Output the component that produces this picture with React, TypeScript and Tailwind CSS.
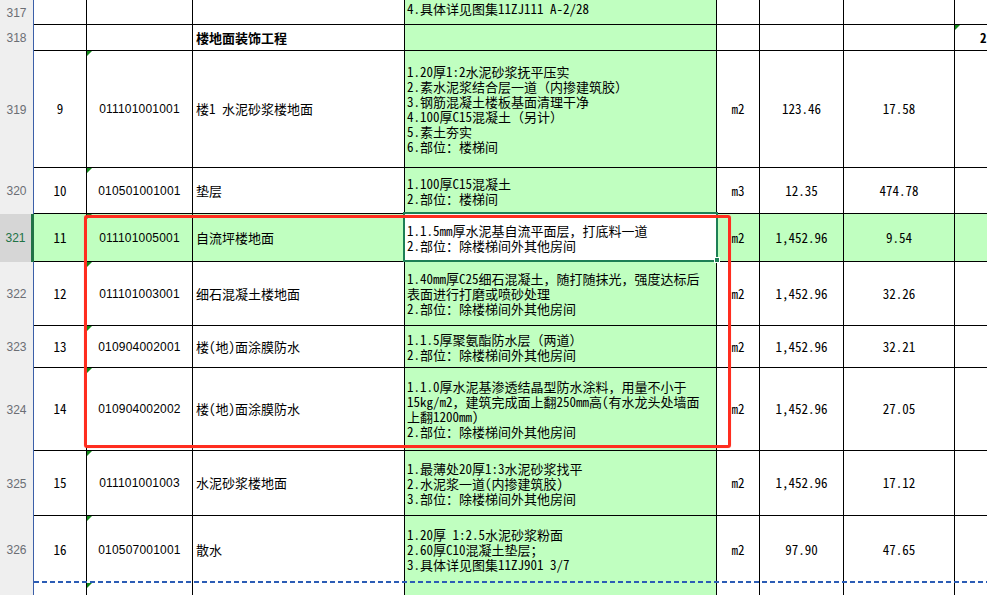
const song = "font-['Noto_Sans_Mono_CJK_SC','Noto_Sans_CJK_SC',monospace]";
const sans = "font-['Liberation_Sans','Noto_Sans_CJK_SC',sans-serif]";

type RowData = {
  n: number;
  h: string;
  a?: string;
  b?: string;
  c?: string;
  bold?: boolean;
  d?: string[];
  dTop?: boolean;
  e?: string;
  f?: string;
  g?: string;
  hText?: string;
  tri?: boolean;
  noBottom?: boolean;
  hideNum?: boolean;
};

const rows: RowData[] = [
  { n: 317, h: "h-[25px]", d: ["4.具体详见图集11ZJ111 A-2/28"], dTop: true },
  { n: 318, h: "h-[26px]", c: "楼地面装饰工程", bold: true, hText: "2" },
  {
    n: 319,
    h: "h-[117px]",
    a: "9",
    b: "011101001001",
    c: "楼1 水泥砂浆楼地面",
    d: [
      "1.20厚1:2水泥砂浆抚平压实",
      "2.素水泥浆结合层一道（内掺建筑胶）",
      "3.钢筋混凝土楼板基面清理干净",
      "4.100厚C15混凝土（另计）",
      "5.素土夯实",
      "6.部位：楼梯间",
    ],
    e: "m2",
    f: "123.46",
    g: "17.58",
    tri: true,
  },
  {
    n: 320,
    h: "h-[46px]",
    a: "10",
    b: "010501001001",
    c: "垫层",
    d: ["1.100厚C15混凝土", "2.部位：楼梯间"],
    e: "m3",
    f: "12.35",
    g: "474.78",
    tri: true,
  },
  {
    n: 321,
    h: "h-[48px]",
    a: "11",
    b: "011101005001",
    c: "自流坪楼地面",
    d: ["1.1.5mm厚水泥基自流平面层，打底料一道", "2.部位：除楼梯间外其他房间"],
    e: "m2",
    f: "1,452.96",
    g: "9.54",
    tri: true,
  },
  {
    n: 322,
    h: "h-[64px]",
    a: "12",
    b: "011101003001",
    c: "细石混凝土楼地面",
    d: [
      "1.40mm厚C25细石混凝土，随打随抹光，强度达标后",
      "表面进行打磨或喷砂处理",
      "2.部位：除楼梯间外其他房间",
    ],
    e: "m2",
    f: "1,452.96",
    g: "32.26",
    tri: true,
  },
  {
    n: 323,
    h: "h-[42px]",
    a: "13",
    b: "010904002001",
    c: "楼(地)面涂膜防水",
    d: ["1.1.5厚聚氨酯防水层（两道）", "2.部位：除楼梯间外其他房间"],
    e: "m2",
    f: "1,452.96",
    g: "32.21",
    tri: true,
  },
  {
    n: 324,
    h: "h-[83px]",
    a: "14",
    b: "010904002002",
    c: "楼(地)面涂膜防水",
    d: [
      "1.1.0厚水泥基渗透结晶型防水涂料，用量不小于",
      "15kg/m2，建筑完成面上翻250mm高(有水龙头处墙面",
      "上翻1200mm)",
      "2.部位：除楼梯间外其他房间",
    ],
    e: "m2",
    f: "1,452.96",
    g: "27.05",
    tri: true,
  },
  {
    n: 325,
    h: "h-[65px]",
    a: "15",
    b: "011101001003",
    c: "水泥砂浆楼地面",
    d: ["1.最薄处20厚1:3水泥砂浆找平", "2.水泥浆一道(内掺建筑胶)", "3.部位：除楼梯间外其他房间"],
    e: "m2",
    f: "1,452.96",
    g: "17.12",
    tri: true,
  },
  {
    n: 326,
    h: "h-[67px]",
    a: "16",
    b: "010507001001",
    c: "散水",
    d: ["1.20厚 1:2.5水泥砂浆粉面", "2.60厚C10混凝土垫层；", "3.具体详见图集11ZJ901 3/7"],
    e: "m2",
    f: "97.90",
    g: "47.65",
    tri: true,
    noBottom: true,
  },
  { n: 327, h: "h-[48px]", tri: true, hideNum: true },
];

function Triangle() {
  return (
    <span className="absolute left-0 top-0 h-0 w-0 border-t-[5px] border-r-[5px] border-t-[#12881a] border-r-transparent" />
  );
}

function Row({ r }: { r: RowData }) {
  const sel = r.n === 321;
  const bg = sel ? "bg-[#c0ffc0]" : "bg-white";
  const line = r.noBottom ? "border-r border-black" : "border-r border-b border-black";
  return (
    <div className={`flex ${r.h}`}>
      <div
        className={`flex w-[34px] shrink-0 items-center justify-center text-[12px] ${sans} ${
          sel
            ? "border-r-[3px] border-[#217346] bg-[#d6d6d6] text-[#217346]"
            : "border-r border-[#3b5fa8] bg-[#efefef] text-[#6b6e74]"
        }`}
      >
        {!r.hideNum && r.n}
      </div>
      <div className={`flex w-[53px] shrink-0 items-center justify-center text-[13px] text-black ${song} ${bg} ${line}`}>
        {r.a}
      </div>
      <div
        className={`relative flex w-[106px] shrink-0 items-center justify-center text-[12px] tracking-[0.2px] text-black ${sans} ${bg} ${line}`}
      >
        {r.tri && <Triangle />}
        {r.b}
      </div>
      <div
        className={`flex w-[212px] shrink-0 items-center whitespace-nowrap pl-[3px] text-[13px] text-black ${song} ${
          r.bold ? "font-bold" : ""
        } ${bg} ${line}`}
      >
        {r.c}
      </div>
      <div
        className={`flex w-[312px] shrink-0 flex-col whitespace-nowrap pl-[2px] text-[13px] leading-[15px] text-black ${song} ${
          r.dTop ? "justify-start pt-[1px]" : "justify-center"
        } ${sel ? "bg-white" : "bg-[#c0ffc0]"} ${line}`}
      >
        {r.d?.map((t) => (
          <div key={t}>{t}</div>
        ))}
      </div>
      <div className={`flex w-[43px] shrink-0 items-center justify-center text-[13px] text-black ${song} ${bg} ${line}`}>
        {r.e}
      </div>
      <div className={`flex w-[84px] shrink-0 items-center justify-center text-[13px] text-black ${song} ${bg} ${line}`}>
        {r.f}
      </div>
      <div className={`flex w-[111px] shrink-0 items-center justify-center text-[13px] text-black ${song} ${bg} ${line}`}>
        {r.g}
      </div>
      <div
        className={`relative flex flex-1 items-center pl-[25px] text-[13px] font-bold text-black ${song} ${bg} ${
          r.noBottom ? "" : "border-b border-black"
        }`}
      >
        {r.n === 318 && <Triangle />}
        {r.hText}
      </div>
    </div>
  );
}

export default function App() {
  return (
    <div className="relative h-[595px] w-[987px] overflow-hidden bg-white">
      {rows.map((r) => (
        <Row key={r.n} r={r} />
      ))}

      {/* page break */}
      <div className="absolute left-[34px] right-0 top-[581px] h-[2px] bg-[repeating-linear-gradient(90deg,#2b5cb5_0_5px,transparent_5px_8px)]" />

      {/* active cell */}
      <div className="absolute left-[403px] top-[212px] h-[50px] w-[315px] border-2 border-[#1d7f55]" />
      <div className="absolute left-[714px] top-[257px] h-[6px] w-[6px] border border-white bg-[#1d7f55]" />

      {/* annotation box */}
      <div className="absolute left-[84px] top-[215px] h-[233px] w-[647px] rounded-[3px] border-[3px] border-[#ff2d1f] shadow-[0_0_1px_#ff8a80]" />
    </div>
  );
}
